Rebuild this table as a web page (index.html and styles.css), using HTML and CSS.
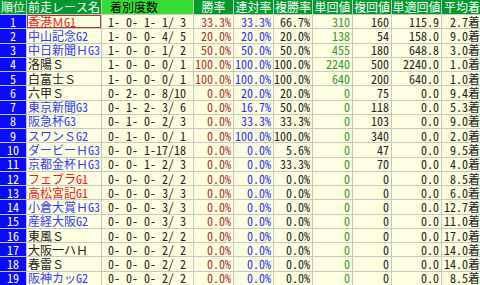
FILE: index.html
```html
<!DOCTYPE html>
<html lang="ja">
  <head>
    <meta charset="UTF-8" />
    <title>前走レース別成績</title>
    <link rel="stylesheet" href="styles.css">
  </head>
  <body>
    <div class="stats">
      <!-- header -->
      <div class="row head">
        <div class="c rank">順位</div>
        <div class="c name">前走レース名</div>
        <div class="c rec">着別度数</div>
        <div class="c">勝率</div>
        <div class="c">連対率</div>
        <div class="c">複勝率</div>
        <div class="c">単回値</div>
        <div class="c">複回値</div>
        <div class="c">単適回値</div>
        <div class="c">平均着</div>
      </div>

      <div class="row">
        <div class="c rank">1</div>
        <div class="c name red selected">香港ＭG1</div>
        <div class="c rec">1- 0- 1- 1/ 3</div>
        <div class="c num win">33.3%</div>
        <div class="c num place">33.3%</div>
        <div class="c num">66.7%</div>
        <div class="c num ret">310</div>
        <div class="c num">160</div>
        <div class="c num">115.9</div>
        <div class="c num">2.7着</div>
      </div>
      <div class="row">
        <div class="c rank">2</div>
        <div class="c name blue">中山記念G2</div>
        <div class="c rec">1- 0- 0- 4/ 5</div>
        <div class="c num win">20.0%</div>
        <div class="c num place">20.0%</div>
        <div class="c num">20.0%</div>
        <div class="c num ret">138</div>
        <div class="c num">54</div>
        <div class="c num">158.0</div>
        <div class="c num">9.0着</div>
      </div>
      <div class="row">
        <div class="c rank">3</div>
        <div class="c name blue">中日新聞ＨG3</div>
        <div class="c rec">1- 0- 0- 1/ 2</div>
        <div class="c num win">50.0%</div>
        <div class="c num place">50.0%</div>
        <div class="c num">50.0%</div>
        <div class="c num ret">455</div>
        <div class="c num">180</div>
        <div class="c num">648.8</div>
        <div class="c num">3.0着</div>
      </div>
      <div class="row">
        <div class="c rank">4</div>
        <div class="c name">洛陽Ｓ</div>
        <div class="c rec">1- 0- 0- 0/ 1</div>
        <div class="c num win">100.0%</div>
        <div class="c num place">100.0%</div>
        <div class="c num">100.0%</div>
        <div class="c num ret">2240</div>
        <div class="c num">500</div>
        <div class="c num">2240.0</div>
        <div class="c num">1.0着</div>
      </div>
      <div class="row">
        <div class="c rank">5</div>
        <div class="c name">白富士Ｓ</div>
        <div class="c rec">1- 0- 0- 0/ 1</div>
        <div class="c num win">100.0%</div>
        <div class="c num place">100.0%</div>
        <div class="c num">100.0%</div>
        <div class="c num ret">640</div>
        <div class="c num">200</div>
        <div class="c num">640.0</div>
        <div class="c num">1.0着</div>
      </div>
      <div class="row">
        <div class="c rank">6</div>
        <div class="c name">六甲Ｓ</div>
        <div class="c rec">0- 2- 0- 8/10</div>
        <div class="c num win">0.0%</div>
        <div class="c num place">20.0%</div>
        <div class="c num">20.0%</div>
        <div class="c num ret">0</div>
        <div class="c num">75</div>
        <div class="c num">0.0</div>
        <div class="c num">9.4着</div>
      </div>
      <div class="row">
        <div class="c rank">7</div>
        <div class="c name blue">東京新聞G3</div>
        <div class="c rec">0- 1- 2- 3/ 6</div>
        <div class="c num win">0.0%</div>
        <div class="c num place">16.7%</div>
        <div class="c num">50.0%</div>
        <div class="c num ret">0</div>
        <div class="c num">118</div>
        <div class="c num">0.0</div>
        <div class="c num">5.3着</div>
      </div>
      <div class="row">
        <div class="c rank">8</div>
        <div class="c name blue">阪急杯G3</div>
        <div class="c rec">0- 1- 0- 2/ 3</div>
        <div class="c num win">0.0%</div>
        <div class="c num place">33.3%</div>
        <div class="c num">33.3%</div>
        <div class="c num ret">0</div>
        <div class="c num">103</div>
        <div class="c num">0.0</div>
        <div class="c num">9.0着</div>
      </div>
      <div class="row">
        <div class="c rank">9</div>
        <div class="c name blue">スワンＳG2</div>
        <div class="c rec">0- 1- 0- 0/ 1</div>
        <div class="c num win">0.0%</div>
        <div class="c num place">100.0%</div>
        <div class="c num">100.0%</div>
        <div class="c num ret">0</div>
        <div class="c num">340</div>
        <div class="c num">0.0</div>
        <div class="c num">2.0着</div>
      </div>
      <div class="row">
        <div class="c rank">10</div>
        <div class="c name blue">ダービーＨG3</div>
        <div class="c rec">0- 0- 1-17/18</div>
        <div class="c num win">0.0%</div>
        <div class="c num place">0.0%</div>
        <div class="c num">5.6%</div>
        <div class="c num ret">0</div>
        <div class="c num">47</div>
        <div class="c num">0.0</div>
        <div class="c num">9.5着</div>
      </div>
      <div class="row">
        <div class="c rank">11</div>
        <div class="c name blue">京都金杯ＨG3</div>
        <div class="c rec">0- 0- 1- 2/ 3</div>
        <div class="c num win">0.0%</div>
        <div class="c num place">0.0%</div>
        <div class="c num">33.3%</div>
        <div class="c num ret">0</div>
        <div class="c num">70</div>
        <div class="c num">0.0</div>
        <div class="c num">4.0着</div>
      </div>
      <div class="row">
        <div class="c rank">12</div>
        <div class="c name red">フェブラG1</div>
        <div class="c rec">0- 0- 0- 2/ 2</div>
        <div class="c num win">0.0%</div>
        <div class="c num place">0.0%</div>
        <div class="c num">0.0%</div>
        <div class="c num ret">0</div>
        <div class="c num">0</div>
        <div class="c num">0.0</div>
        <div class="c num">8.5着</div>
      </div>
      <div class="row">
        <div class="c rank">13</div>
        <div class="c name red">高松宮記G1</div>
        <div class="c rec">0- 0- 0- 3/ 3</div>
        <div class="c num win">0.0%</div>
        <div class="c num place">0.0%</div>
        <div class="c num">0.0%</div>
        <div class="c num ret">0</div>
        <div class="c num">0</div>
        <div class="c num">0.0</div>
        <div class="c num">6.0着</div>
      </div>
      <div class="row">
        <div class="c rank">14</div>
        <div class="c name blue">小倉大賞ＨG3</div>
        <div class="c rec">0- 0- 0- 3/ 3</div>
        <div class="c num win">0.0%</div>
        <div class="c num place">0.0%</div>
        <div class="c num">0.0%</div>
        <div class="c num ret">0</div>
        <div class="c num">0</div>
        <div class="c num">0.0</div>
        <div class="c num">12.7着</div>
      </div>
      <div class="row">
        <div class="c rank">15</div>
        <div class="c name blue">産経大阪G2</div>
        <div class="c rec">0- 0- 0- 3/ 3</div>
        <div class="c num win">0.0%</div>
        <div class="c num place">0.0%</div>
        <div class="c num">0.0%</div>
        <div class="c num ret">0</div>
        <div class="c num">0</div>
        <div class="c num">0.0</div>
        <div class="c num">11.0着</div>
      </div>
      <div class="row">
        <div class="c rank">16</div>
        <div class="c name">東風Ｓ</div>
        <div class="c rec">0- 0- 0- 2/ 2</div>
        <div class="c num win">0.0%</div>
        <div class="c num place">0.0%</div>
        <div class="c num">0.0%</div>
        <div class="c num ret">0</div>
        <div class="c num">0</div>
        <div class="c num">0.0</div>
        <div class="c num">17.0着</div>
      </div>
      <div class="row">
        <div class="c rank">17</div>
        <div class="c name">大阪一ハＨ</div>
        <div class="c rec">0- 0- 0- 2/ 2</div>
        <div class="c num win">0.0%</div>
        <div class="c num place">0.0%</div>
        <div class="c num">0.0%</div>
        <div class="c num ret">0</div>
        <div class="c num">0</div>
        <div class="c num">0.0</div>
        <div class="c num">14.0着</div>
      </div>
      <div class="row">
        <div class="c rank">18</div>
        <div class="c name">春雷Ｓ</div>
        <div class="c rec">0- 0- 0- 2/ 2</div>
        <div class="c num win">0.0%</div>
        <div class="c num place">0.0%</div>
        <div class="c num">0.0%</div>
        <div class="c num ret">0</div>
        <div class="c num">0</div>
        <div class="c num">0.0</div>
        <div class="c num">14.0着</div>
      </div>
      <div class="row">
        <div class="c rank">19</div>
        <div class="c name blue">阪神カッG2</div>
        <div class="c rec">0- 0- 0- 2/ 2</div>
        <div class="c num win">0.0%</div>
        <div class="c num place">0.0%</div>
        <div class="c num">0.0%</div>
        <div class="c num ret">0</div>
        <div class="c num">0</div>
        <div class="c num">0.0</div>
        <div class="c num">8.5着</div>
      </div>
    </div>
  </body>
</html>
```

FILE: styles.css
```css
body {
  margin: 0;
  padding: 0;
  background: white;
  font-family: "Noto Sans Mono CJK JP", "Noto Sans CJK JP", sans-serif;
  font-size: 12px;
}

/* the whole table is one grid, grey gaps act as the cell lines */
.stats {
  display: grid;
  grid-template-columns: 26px 74px 91px 39px 39px 38px 39px 38px 49px 1fr;
  grid-template-rows: 14px repeat(19, 1fr);
  gap: 1px;
  height: 285px;
  background: #c8c8c0;
}

.row {
  display: contents;
}

.c {
  display: flex;
  align-items: center;
  justify-content: flex-start;
  padding: 0 2px;
  background: #fefee0;
  color: #222;
  line-height: 12px;
  white-space: nowrap;
}

.head .c {
  justify-content: center;
  background: #009a2c;
  color: white;
  padding: 0;
}

.head .rec {
  background: #34dc34;
  color: black;
  justify-content: flex-start;
  padding-left: 8px;
}

.head .name {
  justify-content: flex-start;
  padding-left: 1px;
}

.rank {
  justify-content: center;
  background: #0a0aff;
  color: white;
  padding: 0;
}

.num {
  justify-content: flex-end;
}

.rec {
  padding-left: 6px;
}

.name {
  padding-left: 1px;
}

.selected {
  box-shadow: inset 0 0 0 1px #b03a3a;
}

.red {
  color: #f01818;
}

.blue {
  color: #2f3cff;
}

.win {
  color: #a83232;
}

.place {
  color: #2e2eff;
}

.ret {
  color: #2f9a2f;
}
```
